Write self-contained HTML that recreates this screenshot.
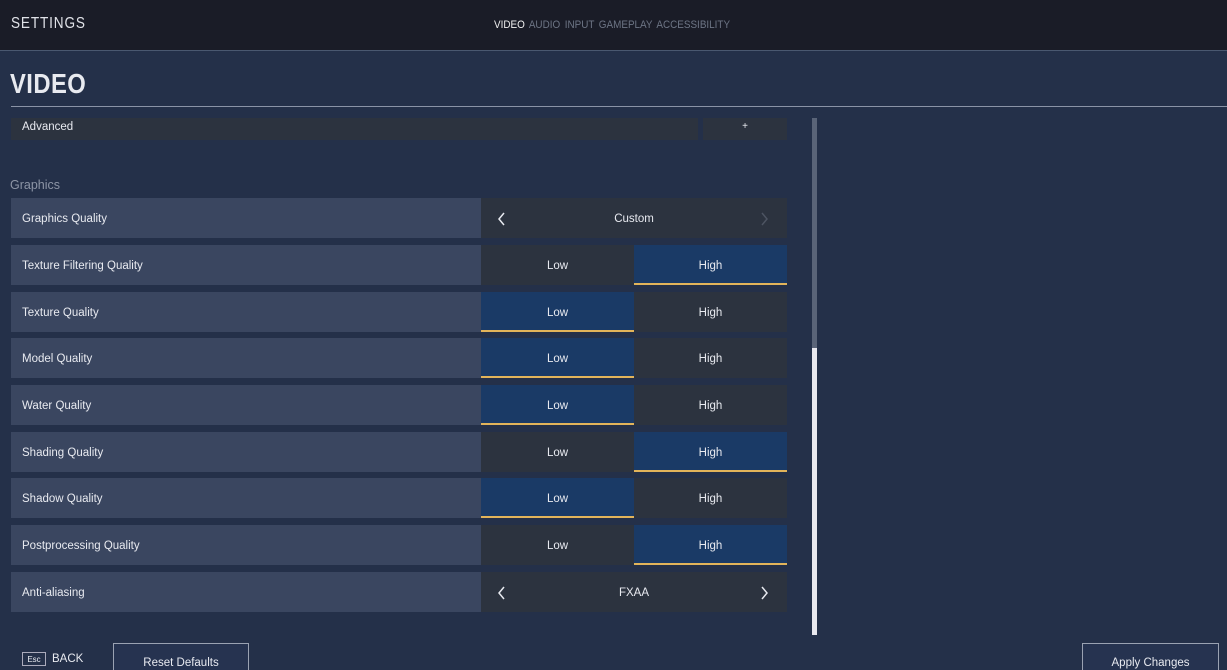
<!DOCTYPE html><html><head><style>
html,body{margin:0;width:1227px;height:670px;overflow:hidden}
body{background:#243049;font-family:"Liberation Sans",sans-serif;color:#e8eaf0;position:relative}
.hdr{position:absolute;left:0;top:0;width:1227px;height:50px;background:#1a1c27;border-bottom:1px solid #4a5870}
.a{position:absolute}
.t{font-size:16px;letter-spacing:1px;left:11px;top:15px;color:#e0e2e8;transform:scaleX(0.85);transform-origin:0 0}
.nav{top:19px;left:494px;font-size:11px;color:#6d7585;word-spacing:2px;transform:scaleX(0.9);transform-origin:0 0}
.nav b{color:#f0f0f0;font-weight:normal}
h1{position:absolute;margin:0;left:10px;top:68px;font-size:28px;font-weight:bold;letter-spacing:0.5px;transform:scaleX(0.85);transform-origin:0 0}
.rule{left:11px;top:106px;width:1216px;height:1px;background:#8a93a6}
.row{position:absolute;left:11px;width:776px;height:40px;font-size:11.5px}
.lab{position:absolute;left:0;top:0;width:470px;height:40px;background:#3a4660;line-height:42px;padding-left:11px;box-sizing:border-box}
.o{position:absolute;top:0;height:40px;width:153px;background:#2c333f;text-align:center;line-height:42px}
.o.s{background:#1a3a66;border-bottom:2px solid #e2b45a;box-sizing:border-box}
.sel{position:absolute;left:470px;top:0;width:306px;height:40px;background:#2c333f;text-align:center;line-height:42px}
.sel svg{position:absolute;top:14px}
.btn{position:absolute;border:1px solid #9aa2b2;background:#263350;font-size:11.5px;text-align:center;line-height:38px;box-sizing:border-box}
</style></head><body>
<div class="hdr"><div class="a t">SETTINGS</div><div class="a nav"><b>VIDEO</b> AUDIO INPUT GAMEPLAY ACCESSIBILITY</div></div>
<h1>VIDEO</h1><div class="a rule"></div>
<div class="a" style="left:11px;top:118px;width:687px;height:22px;background:#2c333f;font-size:11.5px;line-height:18px;padding-left:11px;box-sizing:border-box">Advanced</div>
<div class="a" style="left:703px;top:118px;width:84px;height:22px;background:#2c333f;font-size:10px;text-align:center;line-height:17px">+</div>
<div class="a" style="left:10px;top:178px;font-size:12.5px;color:#8d95a6">Graphics</div>
<div class="a" style="left:812px;top:118px;width:5px;height:230px;background:#5a6478"></div>
<div class="a" style="left:812px;top:348px;width:5px;height:287px;background:#e8e8ee"></div>

<div class="row" style="top:198px"><div class="lab">Graphics Quality</div><div class="sel">Custom<svg style="left:16px" width="10" height="14"><path d="M7 1L2 7l5 6" stroke="#e8eaf0" stroke-width="1.5" fill="none"/></svg><svg style="left:278px" width="10" height="14"><path d="M3 1l5 6-5 6" stroke="#4d5462" stroke-width="1.5" fill="none"/></svg></div></div>
<div class="row" style="top:245px"><div class="lab">Texture Filtering Quality</div><div class="o" style="left:470px">Low</div><div class="o s" style="left:623px">High</div></div>
<div class="row" style="top:292px"><div class="lab">Texture Quality</div><div class="o s" style="left:470px">Low</div><div class="o" style="left:623px">High</div></div>
<div class="row" style="top:338px"><div class="lab">Model Quality</div><div class="o s" style="left:470px">Low</div><div class="o" style="left:623px">High</div></div>
<div class="row" style="top:385px"><div class="lab">Water Quality</div><div class="o s" style="left:470px">Low</div><div class="o" style="left:623px">High</div></div>
<div class="row" style="top:432px"><div class="lab">Shading Quality</div><div class="o" style="left:470px">Low</div><div class="o s" style="left:623px">High</div></div>
<div class="row" style="top:478px"><div class="lab">Shadow Quality</div><div class="o s" style="left:470px">Low</div><div class="o" style="left:623px">High</div></div>
<div class="row" style="top:525px"><div class="lab">Postprocessing Quality</div><div class="o" style="left:470px">Low</div><div class="o s" style="left:623px">High</div></div>
<div class="row" style="top:572px"><div class="lab">Anti-aliasing</div><div class="sel">FXAA<svg style="left:16px" width="10" height="14"><path d="M7 1L2 7l5 6" stroke="#e8eaf0" stroke-width="1.5" fill="none"/></svg><svg style="left:278px" width="10" height="14"><path d="M3 1l5 6-5 6" stroke="#e8eaf0" stroke-width="1.5" fill="none"/></svg></div></div>

<div class="a" style="left:22px;top:652px;width:24px;height:14px;border:1px solid #aab;font-size:8px;text-align:center;line-height:13px;box-sizing:border-box">Esc</div>
<div class="a" style="left:52px;top:653px;font-size:11.5px">BACK</div>
<div class="btn" style="left:113px;top:643px;width:136px;height:40px">Reset Defaults</div>
<div class="btn" style="left:1082px;top:643px;width:137px;height:40px">Apply Changes</div>
</body></html>
